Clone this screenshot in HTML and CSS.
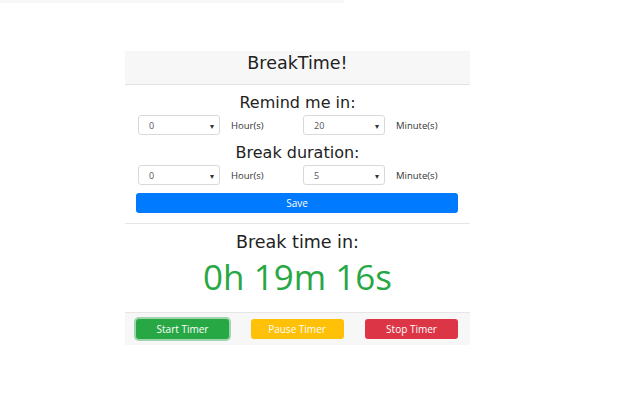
FILE: index.html
```html
<!DOCTYPE html>
<html>
<head>
<meta charset="utf-8">
<link rel="stylesheet" href="styles.css">
</head>
<body>
<div class="topbar"></div>
<div class="card">
  <div class="card-header">BreakTime!</div>
  <div class="card-body">
    <div class="label">Remind me in:</div>
    <div class="row">
      <div class="select"><span>0</span><span class="caret">▾</span></div>
      <span class="unit">Hour(s)</span>
      <div class="select"><span>20</span><span class="caret">▾</span></div>
      <span class="unit">Minute(s)</span>
    </div>
    <div class="label">Break duration:</div>
    <div class="row">
      <div class="select"><span>0</span><span class="caret">▾</span></div>
      <span class="unit">Hour(s)</span>
      <div class="select"><span>5</span><span class="caret">▾</span></div>
      <span class="unit">Minute(s)</span>
    </div>
    <button class="btn save">Save</button>
  </div>
  <div class="timer">
    <div class="label big">Break time in:</div>
    <div class="count">0h 19m 16s</div>
  </div>
  <div class="card-footer">
    <button class="btn start">Start Timer</button>
    <button class="btn pause">Pause Timer</button>
    <button class="btn stop">Stop Timer</button>
  </div>
</div>
</body>
</html>
```
FILE: styles.css
```css
body {
  margin: 0;
  background: #fff;
  font-family: "Open Sans", sans-serif;
  color: #212529;
}
.topbar {
  width: 344px;
  height: 3px;
  background: #f7f7f7;
}
.card {
  margin: 48px 0 0 125px;
  width: 345px;
}
.card-header {
  background: #f7f7f7;
  border-bottom: 1px solid #e2e2e2;
  height: 33px;
  text-align: center;
  font-family: "DejaVu Sans", sans-serif;
  font-size: 17.5px;
  line-height: 24px;
  color: #222;
}
.card-body {
  padding: 6px 11px 10px 11px;
  border-bottom: 1px solid #e6e6e6;
  display: flex;
  flex-direction: column;
}
.label {
  text-align: center;
  font-family: "DejaVu Sans", sans-serif;
  font-size: 16px;
  line-height: 24px;
  color: #222;
}
.label.big {
  font-size: 17.5px;
}
.row {
  display: flex;
  align-items: center;
  padding-left: 2px;
  margin-bottom: 6px;
}
.select {
  flex: 0 0 82px;
  height: 20px;
  box-sizing: border-box;
  border: 1px solid #d9d9d9;
  border-radius: 3px;
  display: flex;
  align-items: center;
  justify-content: space-between;
  padding: 0 5px 0 10px;
  font-size: 9px;
  color: #555;
}
.caret {
  font-size: 8px;
  color: #333;
}
.unit {
  font-size: 9.5px;
  color: #333;
  margin-left: 11px;
  flex: 0 0 72px;
}
.btn {
  border: none;
  border-radius: 3px;
  color: #fff;
  font-family: "Open Sans", sans-serif;
  font-size: 10px;
  height: 20px;
  padding: 0;
  cursor: pointer;
}
.save {
  margin-top: 2px;
  width: 322px;
  background: #007bff;
}
.timer {
  padding-top: 6px;
  height: 82px;
  text-align: center;
}
.count {
  color: #28a745;
  font-size: 35px;
  line-height: 44px;
  margin-top: 1px;
}
.card-footer {
  background: #f7f7f7;
  border-top: 1px solid #e6e6e6;
  height: 32px;
  display: flex;
  align-items: center;
  justify-content: space-between;
  padding: 0 12px 0 11px;
}
.start, .pause, .stop {
  width: 93px;
}
.start {
  background: #28a745;
  box-shadow: 0 0 0 2px rgba(72, 180, 97, 0.5);
}
.pause {
  background: #ffc107;
}
.stop {
  background: #dc3545;
}
```
